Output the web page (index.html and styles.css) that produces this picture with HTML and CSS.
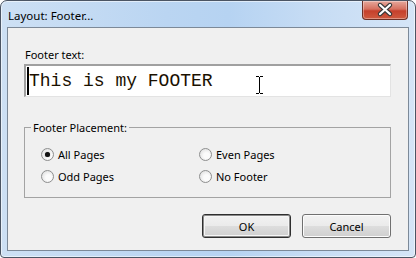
FILE: index.html
```html
<!DOCTYPE html>
<html lang="en">
    <head>
        <title>Layout: Footer...</title>
        <meta charset="UTF-8">
        <meta name="viewport" content="width=device-width, initial-scale=1">
        <link rel="stylesheet" href="styles.css">
    </head>
    <body>
        <div class="window">
            <div class="titlebar">
                <span class="title">Layout: Footer...</span>
                <div class="close">
                    <svg width="46" height="19" viewBox="0 0 46 19">
                        <path d="M18 5 L28 14 M28 5 L18 14" stroke="#3b3b3b" stroke-width="4.4" stroke-linecap="round"/>
                        <path d="M18 5 L28 14 M28 5 L18 14" stroke="#fff" stroke-width="2.2" stroke-linecap="round"/>
                    </svg>
                </div>
            </div>
            <div class="client">
                <div class="label">Footer text:</div>
                <div class="field">
                    <span class="caret"></span>
                    <span class="value">This is my FOOTER</span>
                    <svg class="ibeam" width="9" height="18" viewBox="0 0 9 18">
                        <path d="M1 0.5 H4 M5 0.5 H8 M4.5 1 V17 M1 17.5 H4 M5 17.5 H8" stroke="#000" stroke-width="1" fill="none"/>
                    </svg>
                </div>
                <fieldset class="group">
                    <legend>Footer Placement:</legend>
                    <div class="options">
                        <label class="option"><i class="radio checked"></i>All Pages</label>
                        <label class="option"><i class="radio"></i>Even Pages</label>
                        <label class="option"><i class="radio"></i>Odd Pages</label>
                        <label class="option"><i class="radio"></i>No Footer</label>
                    </div>
                </fieldset>
                <div class="buttons">
                    <button class="btn default">OK</button>
                    <button class="btn">Cancel</button>
                </div>
            </div>
        </div>
    </body>
</html>
```

FILE: styles.css
```css
*{
    margin: 0;
    padding: 0;
    box-sizing: border-box;
}
body{
    font-family: "Noto Sans", "Liberation Sans", sans-serif;
    font-size: 11px;
    color: #000;
    background: #fff;
}
.window{
    width: 416px;
    height: 258px;
    border: 1px solid #4b5564;
    border-radius: 7px 7px 4px 4px;
    background: linear-gradient(to right, #cde0f4, #bad5f2 40%, #b6d3f2 55%, #c6dcf4 75%, #d5e5f7);
    box-shadow: inset 0 0 0 1px rgba(255,255,255,0.55);
    padding: 0 6px 6px;
    display: flex;
    flex-direction: column;
}
.titlebar{
    height: 26px;
    display: flex;
    justify-content: space-between;
    align-items: flex-start;
}
.title{
    padding: 8px 0 0 1px;
    font-size: 11.5px;
    line-height: 14px;
}
.close{
    width: 46px;
    height: 19px;
    margin-right: 1px;
    border: 1px solid #6b3027;
    border-top: none;
    border-radius: 0 0 4px 4px;
    background: linear-gradient(#e6a89c, #d6705f 45%, #c5402c 55%, #cf5a3f);
    box-shadow: inset 0 0 0 1px rgba(255,255,255,0.35);
    overflow: hidden;
}
.close svg{
    display: block;
    margin: -1px 0 0 -1px;
}
.client{
    flex: 1;
    border: 1px solid #7c8998;
    background: #f0f0f0;
    padding: 19px 17px 12px 16px;
    display: flex;
    flex-direction: column;
}
.label{
    line-height: 15px;
    padding-left: 1px;
}
.field{
    position: relative;
    margin-top: 2px;
    height: 33px;
    background: #fff;
    border-top: 2px solid #a0a0a0;
    border-left: 2px solid #a0a0a0;
    border-right: 1px solid #e3e3e3;
    border-bottom: 1px solid #e3e3e3;
    display: flex;
    align-items: center;
    padding-left: 1px;
}
.caret{
    width: 2px;
    height: 28px;
    background: #000;
}
.value{
    font-family: "Liberation Mono", "Courier New", monospace;
    font-size: 18px;
    line-height: 20px;
    color: #1a1000;
    white-space: pre;
}
.ibeam{
    position: absolute;
    left: 229px;
    top: 10px;
}
.group{
    margin-top: 23px;
    border: 1px solid #a3a3a3;
    padding: 0;
}
.group legend{
    margin-left: 6px;
    padding: 0 2px;
    line-height: 15px;
}
.options{
    display: grid;
    grid-template-columns: 158px 1fr;
    grid-auto-rows: 22px;
    padding: 8px 0 10px 16px;
}
.option{
    display: flex;
    align-items: center;
    gap: 4px;
}
.radio{
    width: 13px;
    height: 13px;
    border-radius: 50%;
    border: 1px solid #8e8f8f;
    background: radial-gradient(circle at 60% 60%, #fbfbfb 30%, #dcdcdc 90%);
    display: flex;
    align-items: center;
    justify-content: center;
}
.radio.checked::after{
    content: "";
    width: 5px;
    height: 5px;
    border-radius: 50%;
    background: #111;
    box-shadow: 0 0 1px #555;
}
.buttons{
    margin-top: auto;
    display: flex;
    justify-content: flex-end;
    gap: 11px;
}
.btn{
    width: 89px;
    height: 24px;
    font-family: inherit;
    font-size: 11px;
    color: #000;
    border: 1px solid #707070;
    border-radius: 3px;
    background: linear-gradient(#f2f2f2, #ebebeb 48%, #dddddd 52%, #cfcfcf);
    box-shadow: inset 0 0 0 1px #fcfcfc;
}
.btn.default{
    border-color: #2f2f2f;
    box-shadow: inset 0 0 0 1px #8a8a8a, inset 0 0 0 2px #f6f6f6;
}
```
